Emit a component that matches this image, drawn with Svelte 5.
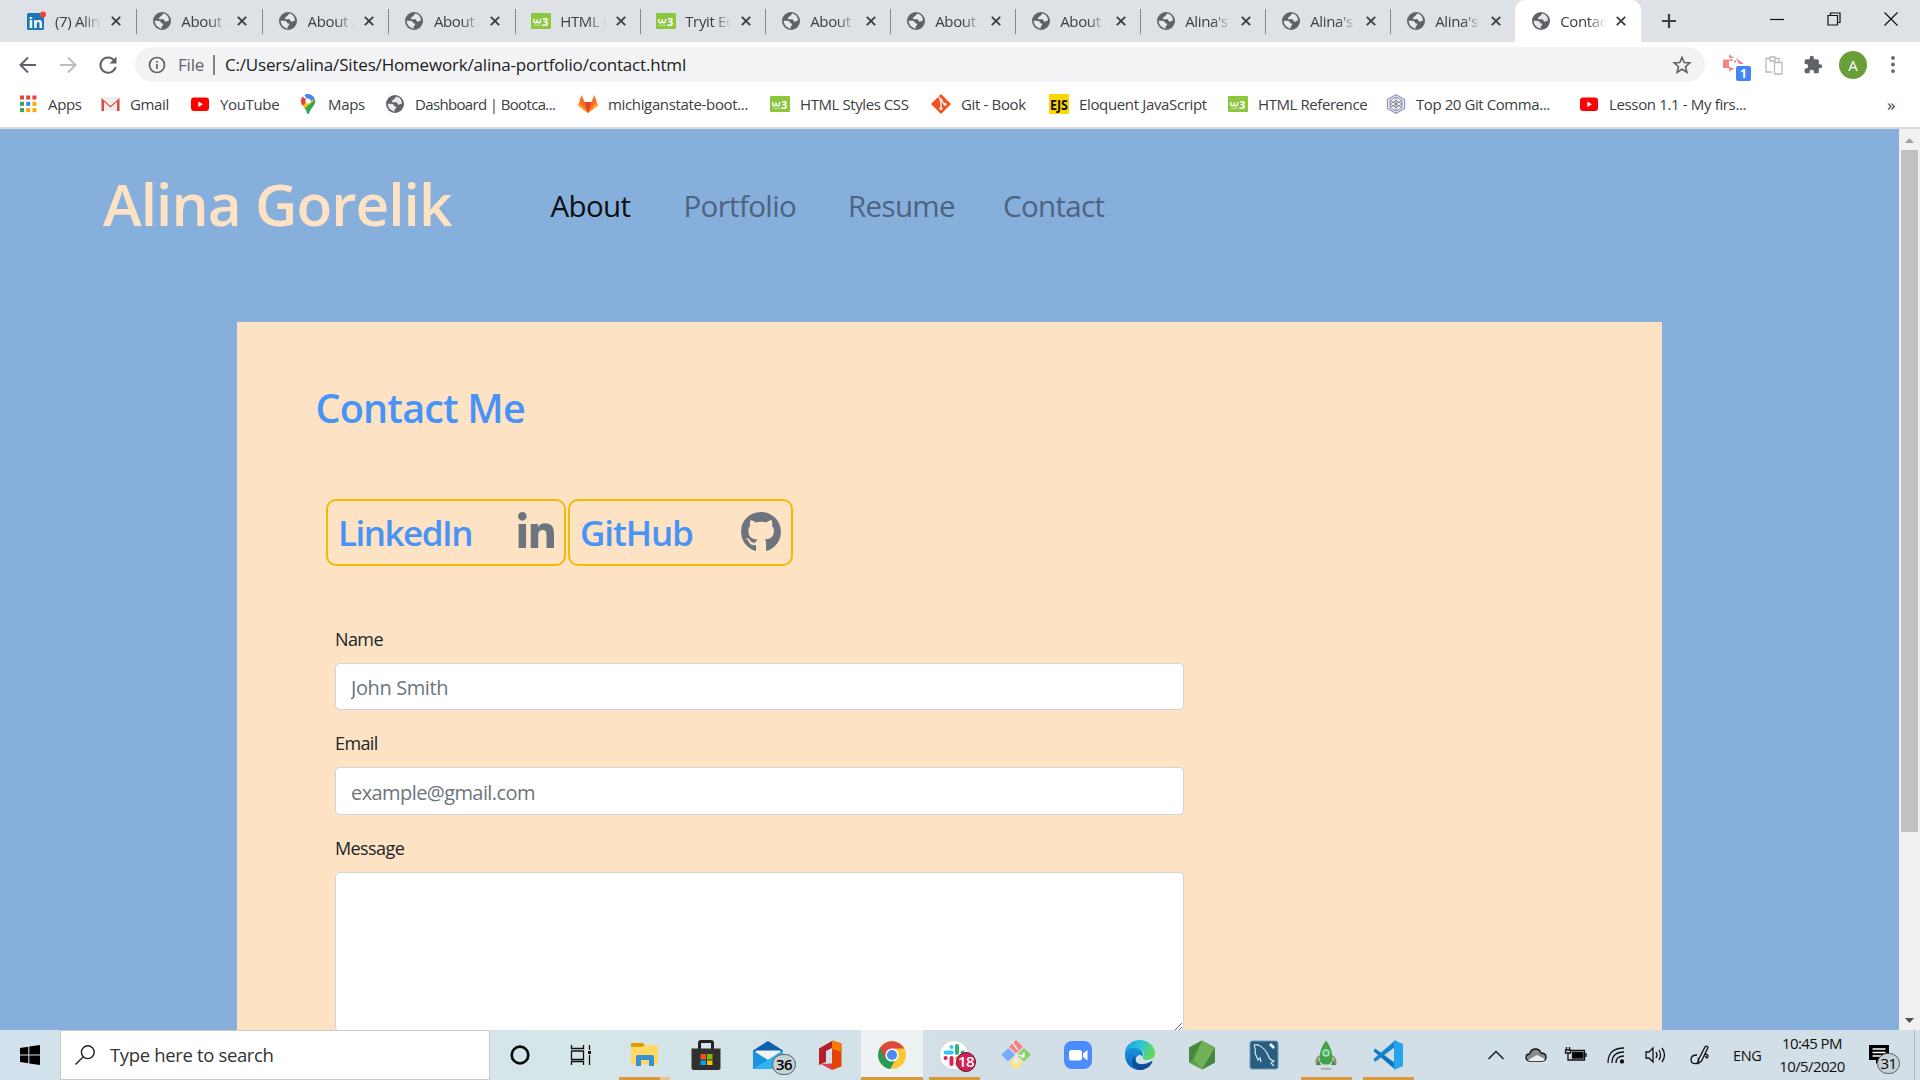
<script>
  const tabs = [
    { icon: 'linkedin', label: '(7) Alina' },
    { icon: 'globe', label: 'About A' },
    { icon: 'globe', label: 'About A' },
    { icon: 'globe', label: 'About A' },
    { icon: 'w3', label: 'HTML in' },
    { icon: 'w3', label: 'Tryit Ed' },
    { icon: 'globe', label: 'About A' },
    { icon: 'globe', label: 'About A' },
    { icon: 'globe', label: 'About A' },
    { icon: 'globe', label: "Alina's" },
    { icon: 'globe', label: "Alina's" },
    { icon: 'globe', label: "Alina's" },
    { icon: 'globe', label: 'Contac', active: true }
  ];
  const bookmarks = [
    ['apps', 'Apps'],
    ['gmail', 'Gmail'],
    ['youtube', 'YouTube'],
    ['maps', 'Maps'],
    ['globe', 'Dashboard | Bootca...'],
    ['gitlab', 'michiganstate-boot...'],
    ['w3', 'HTML Styles CSS'],
    ['git', 'Git - Book'],
    ['ejs', 'Eloquent JavaScript'],
    ['w3', 'HTML Reference'],
    ['hex', 'Top 20 Git Comma...'],
    ['youtube', 'Lesson 1.1 - My firs...']
  ];
  const dotColors = ['#ea4335', '#ea4335', '#ea4335', '#34a853', '#4285f4', '#fbab05', '#34a853', '#fbab05', '#fbab05'];
  const apps = [
    { id: 'cortana' },
    { id: 'taskview' },
    { id: 'explorer', open: true },
    { id: 'store' },
    { id: 'mail' },
    { id: 'office' },
    { id: 'chrome', open: true, current: true },
    { id: 'slack', open: true },
    { id: 'gitbash' },
    { id: 'zoom' },
    { id: 'edge' },
    { id: 'node' },
    { id: 'mysql' },
    { id: 'rocket', open: true },
    { id: 'vscode', open: true }
  ];
</script>

{#snippet favicon(name)}
  <svg class="fav" viewBox="0 0 20 20">
    {#if name === 'globe'}
      <circle cx="10" cy="10" r="9" fill="#5f6368" />
      <path fill="#e6e8eb" d="M11.4 2.6c-1.500 1-1 2-2.300 2.300-1.200.3-.7 1.500-1.800 1.700-.8.2-.4 1.200-.1 1.700h4.100c1.200 0 1 2.200 2.200 2.400 1.400.2 1.200-1.300 3.400-.9.300-3.300-1.800-6.300-5.500-7.200zM2.700 9.700c.1 4 3 7.200 7 7.700v-2.300c1.500-.2 1.500-1.400 1.400-2.600-1.700-.1-2.300-.7-2.500-2.100-2-.6-3.500-.7-5.900-.7z" />
    {:else if name === 'w3'}
      <rect y="2" width="20" height="16" rx="1" fill="#8dc63f" />
      <path d="M2.800 8v2.200q0 1.600 1.500 1.600t1.800-1.600V8.500v1.700q.2 1.600 1.700 1.600 1.700 0 1.700-1.600V8" fill="none" stroke="#fff" stroke-width="1.400" />
      <path d="M3 14.200h7" stroke="#d8ecbc" stroke-width=".8" />
      <text x="11" y="14.500" class="wthree">3</text>
    {:else if name === 'linkedin'}
      <rect x="1" y="2" width="17" height="17" rx="1.500" fill="#1c77b8" />
      <text x="2.500" y="16.500" class="li">in</text>
      <circle cx="17" cy="3.500" r="3" fill="#f44336" />
    {:else if name === 'apps'}
      {#each dotColors as c, i}
        <rect x={2 + (i % 3) * 6.2} y={1.5 + Math.floor(i / 3) * 6.3} width="4" height="4" fill={c} />
      {/each}
    {:else if name === 'gmail'}
      <rect x="1.500" y="3" width="18" height="14" rx="1" fill="#eee" />
      <path d="M1.500 17V4l9 8 9-8v13H17V7.800l-6.500 5.700L4 7.800V17z" fill="#dd4b3e" />
    {:else if name === 'youtube'}
      <rect x="1" y="3.500" width="18" height="13.500" rx="3" fill="#f00" />
      <path d="M8.300 7.400v5.600l4.700-2.800z" fill="#fff" />
    {:else if name === 'maps'}
      <path d="M4.500 2.600A7 7 0 0 0 5 12l5-5z" fill="#ea4335" />
      <path d="M15.500 2.600L5 12l2 3q5-5 9.800-9.500z" fill="#fbbc04" />
      <path d="M16.800 5.400Q18 9 15 12.500q-3 3.500-4.300 7.500h-1.200Q8.700 17 6.800 14.600z" fill="#34a853" />
      <path d="M6.500 1A7 7 0 0 1 16.800 5.400L10 7z" fill="#4285f4" />
      <circle cx="10" cy="7" r="2.600" fill="#fff" />
    {:else if name === 'gitlab'}
      <path d="M0 11.500L3.700 1 6.500 8h7L16.300 1 20 11.500 10 19z" fill="#fc6d26" />
      <path d="M6.500 8h7L10 19z" fill="#e24329" />
      <path d="M0 11.500L1.300 8 10 19zM20 11.500L18.700 8 10 19z" fill="#fca326" />
    {:else if name === 'git'}
      <path d="M10 0l10 10-10 10L0 10z" fill="#f4511e" />
      <path d="M7.500 2.800L10 5.500V14M10 6.500l4 4" stroke="#fff" stroke-width="1.300" fill="none" />
      <circle cx="10" cy="6" r="1.500" fill="#fff" /><circle cx="10" cy="14.500" r="1.600" fill="#fff" /><circle cx="14" cy="10.200" r="1.500" fill="#fff" />
    {:else if name === 'ejs'}
      <rect width="20" height="20" fill="#ffd500" />
      <text x="1" y="16" class="ejs-mark" textLength="18" lengthAdjust="spacingAndGlyphs">EJS</text>
    {:else if name === 'hex'}
      <path d="M10 .8l8.500 4.700v9L10 19.200l-8.500-4.700v-9z" fill="#f5f6fb" stroke="#8291cf" stroke-width="1.200" />
      <path d="M10 3l6 3.500v7L10 17l-6-3.500v-7zM10 3v14M4 6.500l12 7M16 6.500l-12 7M4 10l6-3.500 6 3.500-6 3.500z" fill="none" stroke="#6c7480" stroke-width=".8" />
    {/if}
  </svg>
{/snippet}

{#snippet appIcon(id)}
  <svg class="app-svg" viewBox="0 0 32 32">
    {#if id === 'cortana'}
      <circle cx="16" cy="16" r="8.300" fill="none" stroke="#0b0b0b" stroke-width="2.700" />
    {:else if id === 'taskview'}
      <path d="M6.500 6v3.500h12V6M6.500 12h12v8.500h-12zM6.500 26v-3.500h12V26M24.500 6v5M24.500 16v10" fill="none" stroke="#111" stroke-width="1.300" />
      <rect x="23" y="12" width="3" height="3" fill="#111" />
    {:else if id === 'explorer'}
      <path d="M3 4h12l2 2v5H3z" fill="#dd9f00" />
      <path d="M3 8h11l3-2h13v19.500H3z" fill="#ffd965" />
      <path d="M8 27v-9q0-2 2-2h14q2 0 2 2v9h-5v-6h-8v6z" fill="#3990d5" />
    {:else if id === 'store'}
      <path d="M9.500 11V4q0-1.500 1.500-1.500h10q1.500 0 1.500 1.500v7" fill="none" stroke="#222" stroke-width="3" />
      <path d="M1.500 9.500h29V29q0 2-2 2h-25q-2 0-2-2z" fill="#303030" />
      <path d="M10.500 15H16v5.500h-5.500z" fill="#f25022" /><path d="M17 15h5.500v5.500H17z" fill="#7fba00" />
      <path d="M10.500 21.500H16V26h-5.500z" fill="#00a4ef" /><path d="M17 21.500h5.500V26H17z" fill="#ffb900" />
    {:else if id === 'mail'}
      <path d="M1 11.500L16 2l15 9.500V15H1z" fill="#0a5fae" /><path d="M3.500 11.500h25V20h-25z" fill="#f1f3f6" /><path d="M1 11.500L16 21l15-9.500V30H1z" fill="#1b93de" /><path d="M1 30L31 11.500V30z" fill="#32b3ef" />
    {:else if id === 'office'}
      <path d="M5 9.500L18 2v7l-6 3v11l-7 3z" fill="#b4202a" />
      <path d="M18 1.500l9.500 3v23L18 31z" fill="#e24307" /><path d="M18 1.500l9.500 3V13L18 10z" fill="#f67b0a" />
      <path d="M7 25l11-.5V31z" fill="#e23b54" />
    {:else if id === 'chrome'}
      <circle cx="16" cy="16" r="14" fill="#fcc934" />
      <path d="M16 16L3.900 9A14 14 0 0 0 14.200 29.900L21 18z" fill="#259b57" />
      <path d="M3.900 9A14 14 0 0 1 28.100 9.500H16L9.500 20z" fill="#dc4a3d" />
      <circle cx="16" cy="16" r="6.600" fill="#fff" /><circle cx="16" cy="16" r="5.100" fill="#4a8bf5" />
    {:else if id === 'slack'}
      <circle cx="16" cy="16" r="14.500" fill="#fff" stroke="#c5ccd0" stroke-width=".6" />
      <g fill="none" stroke-width="4" stroke-linecap="round"><path d="M7.500 13.500h6.300M13.500 8v.1" stroke="#36c5f0" /><path d="M19 7v7M24.500 13.500h.1" stroke="#2eb67d" /><path d="M7.500 19h.1M13.500 19v6" stroke="#e01e5a" /><path d="M19 19h6M19 25v.1" stroke="#ecb22e" /></g>
    {:else if id === 'gitbash'}
      <path d="M16 1l6.800 6.800L16 14.500 9.200 7.800z" fill="#fb7d7d" /><path d="M8.200 9l6.800 6.800-7 6.700L1.200 15.800z" fill="#7caaff" />
      <path d="M24 9l6.800 6.800L24 22.500l-6.800-6.700z" fill="#86d35c" /><path d="M16 17l6.800 6.800L16 30.800l-6.800-7z" fill="#ffe47a" />
      <path d="M12 3l6 8M16 14v8M16 16l7 1M24 17v-4" stroke="#e5eef2" stroke-width="1.600" fill="none" /><circle cx="16" cy="22.500" r="2.400" fill="#e5eef2" /><circle cx="23" cy="17" r="2" fill="#e5eef2" />
    {:else if id === 'zoom'}
      <rect x="2" y="2" width="28" height="28" rx="8" fill="#4b8cfd" />
      <rect x="7" y="11" width="13" height="10.500" rx="2.500" fill="#fff" /><path d="M21 14.500l4.500-3.500v10.500L21 18z" fill="#fff" />
    {:else if id === 'edge'}
      <defs><linearGradient id="ea" x1="0" y1=".2" x2="1" y2=".5"><stop offset="0" stop-color="#1b9fe8" /><stop offset=".5" stop-color="#2fc5d8" /><stop offset="1" stop-color="#67dc4f" /></linearGradient><linearGradient id="eb" x1="0" y1="0" x2="0" y2="1"><stop offset="0" stop-color="#1995df" /><stop offset="1" stop-color="#0d62bd" /></linearGradient></defs>
      <path d="M1 15C1 6 8 1 16 1s15 6 15 13c0 5-4 7-8 7-4 0-5-2-4-3.500 2-3 0-7.500-7-7.500S1 15 1 15z" fill="url(#ea)" />
      <path d="M1 16c0-6 5-7 9-7 5 0 9 3 9 6 0 1-.5 2-1.200 2.500-1-3-6-1-6 3C12 27 20 31 20 31H16C8 31 1 25 1 16z" fill="url(#eb)" />
      <path d="M11 16c-2 7 4 12 14 7.500q3-2 3.500-.5-4 8-13 8c-6-1-10-9-4.500-15z" fill="#0c4d98" />
    {:else if id === 'node'}
      <path d="M16 1.500l13 7v15L16 30.500l-13-7v-15z" fill="#5b9e48" /><path d="M16 1.500l13 7L16 30.500 7 20z" fill="#72b057" /><path d="M3 8.500L16 1.500 8 19 3 23.500z" fill="#468b3c" /><path d="M29 8.500v15L16 30.500z" fill="#438644" />
    {:else if id === 'mysql'}
      <rect x="2" y="2" width="28" height="28" rx="2" fill="#285e82" stroke="#749aad" />
      <path d="M6 6c4-2 10 3 13 8 2 4 2 7 7 8l-3 2 3 3M6 6c1 3 2 5 1 8l3 7 2-2 1 4" fill="none" stroke="#dce8ef" stroke-width="1.200" /><path d="M22 5l4 4" stroke="#fff" stroke-width="2.600" />
    {:else if id === 'rocket'}
      <path d="M10 17c-4 2-4 6-3 9M22 17c4 2 4 6 3 9" stroke="#a78260" stroke-width="1.800" fill="none" />
      <path d="M16 1.500Q23 10 22.500 22L19 25.500h-6L9.500 22Q9 10 16 1.500z" fill="#43a34b" /><path d="M8 20l3 6H7zM24 20l-3 6h4z" fill="#2f8d3d" />
      <circle cx="16" cy="14" r="3" fill="#4db879" stroke="#b7e3bd" stroke-width="1.300" /><ellipse cx="16" cy="29.700" rx="6" ry="1" fill="#a2abb0" />
    {:else if id === 'vscode'}
      <path d="M3 9.500L23 24v6.500L1.500 12z" fill="#0b76bd" /><path d="M3 23L23 8V1.500L1.500 20z" fill="#1384cf" /><path d="M22 1l9 4v22l-9 4z" fill="#26a4ee" />
    {/if}
  </svg>
{/snippet}

<div class="screen">
  <div class="tabstrip">
    {#each tabs as tab, i}
      <div class="tab" class:wide={i < 4} class:active={tab.active} class:last={i === 11}>
        {@render favicon(tab.icon)}
        <span class="tab-label">{tab.label}</span>
        <svg class="x" viewBox="0 0 10 10"><path d="M.8.8l8.400 8.400M9.200.8L.8 9.200" /></svg>
      </div>
    {/each}
    <svg class="plus" viewBox="0 0 16 16"><path d="M8 1v14M1 8h14" /></svg>
    <div class="win">
      <svg viewBox="0 0 14 14"><path d="M0 7.500h14" /></svg>
      <svg viewBox="0 0 14 14"><path d="M1 3.500h9.500V13H1zM3.500 3.500V1H13v9.500h-2.500" /></svg>
      <svg viewBox="0 0 14 14"><path d="M.5.5l13 13M13.500.5l-13 13" /></svg>
    </div>
  </div>

  <div class="toolbar">
    <svg class="nav-ico" viewBox="0 0 20 20"><path d="M18 10H3M10 2.500L2.500 10l7.500 7.500" /></svg>
    <svg class="nav-ico dim" viewBox="0 0 20 20"><path d="M2 10h15M10 2.500l7.500 7.500-7.500 7.500" /></svg>
    <svg class="nav-ico" viewBox="0 0 20 20"><path d="M16.300 5.500A7.700 7.700 0 1 0 17.600 12" /><path class="solid" d="M18.500 1.500v7h-7z" /></svg>
    <div class="omnibox">
      <svg class="info" viewBox="0 0 18 18"><circle cx="9" cy="9" r="7.500" /><path d="M9 8v5M9 5v1.700" /></svg>
      <span class="scheme">File</span>
      <span class="bar"></span>
      <span class="url">C:/Users/alina/Sites/Homework/alina-portfolio/contact.html</span>
      <svg class="star" viewBox="0 0 20 20"><path d="M10 2.300l2.200 5.300 5.600.4-4.300 3.700 1.400 5.600-4.900-3-4.900 3 1.400-5.600L2.200 8l5.600-.4z" /></svg>
    </div>
    <div class="ext">
      <svg class="crx" viewBox="0 0 30 28"><path d="M1 5.500h6v8.500H1zM7 .5l5.500 3.500H7zM7 17.500V13l5.500 1.500zM13.500 3.500L22 10h-5z" fill="#f48585" /><path d="M7.500 5h3v2h-3zM12 6.500h2v2h-2z" fill="#f48585" /><rect x="14" y="12" width="15" height="15" rx="2" fill="#4285f4" /><text x="18" y="24">1</text></svg>
      <svg class="clip" viewBox="0 0 20 20"><path d="M8 17H2V3.500h4V2h5v1.500h4V7M6 3.500V6h5V3.500M10.500 7.500H18V19h-7.500z" fill="#fff" stroke="#bbb" stroke-width="1.300" /></svg>
      <svg class="puzzle" viewBox="0 0 24 24"><path d="M20.500 11H19V7c0-1.100-.9-2-2-2h-4V3.500a2.500 2.500 0 0 0-5 0V5H4c-1.100 0-2 .9-2 2v3.800h1.500a2.700 2.700 0 0 1 0 5.400H2V20c0 1.100.9 2 2 2h3.800v-1.500a2.700 2.700 0 0 1 5.400 0V22H17c1.100 0 2-.9 2-2v-4h1.500a2.500 2.500 0 0 0 0-5z" fill="#5f6368" /></svg>
      <span class="avatar">A</span>
      <svg class="kebab" viewBox="0 0 4 18"><circle cx="2" cy="2" r="2" /><circle cx="2" cy="9" r="2" /><circle cx="2" cy="16" r="2" /></svg>
    </div>
  </div>

  <div class="bookmarks">
    {#each bookmarks as [icon, label]}
      <div class="bm" class:long={icon === 'hex' || icon === 'w3'} class:tight={icon === 'globe'}>{@render favicon(icon)}<span>{label}</span></div>
    {/each}
    <span class="more">»</span>
  </div>

  <div class="viewport">
    <div class="page">
      <header>
        <h1>Alina Gorelik</h1>
        <nav><a class="on" href="#about">About</a><a href="#portfolio">Portfolio</a><a href="#resume">Resume</a><a href="#contact">Contact</a></nav>
      </header>
      <main>
        <h2>Contact Me</h2>
        <div class="links">
          <div class="link ln"><span>LinkedIn</span>
            <svg viewBox="0 0 448 448"><path d="M100.280 448H7.400V148.900h92.880zM53.790 108.100C24.090 108.100 0 83.500 0 53.800a53.790 53.790 0 0 1 107.580 0c0 29.700-24.100 54.300-53.790 54.300zM447.900 448h-92.680V302.400c0-34.700-.7-79.200-48.290-79.200-48.290 0-55.690 37.700-55.690 76.700V448h-92.780V148.900h89.080v40.800h1.300c12.400-23.500 42.690-48.300 87.880-48.300 94 0 111.280 61.900 111.280 142.300V448z" /></svg>
          </div>
          <div class="link gh"><span>GitHub</span>
            <svg viewBox="0 8 496 485"><path d="M165.900 397.400c0 2-2.300 3.600-5.200 3.600-3.300.3-5.600-1.300-5.600-3.600 0-2 2.300-3.600 5.200-3.600 3-.3 5.600 1.300 5.600 3.600zM244.800 8C106.100 8 0 113.300 0 252c0 110.900 69.800 205.800 169.500 239.200 12.800 2.300 17.300-5.600 17.300-12.100 0-6.200-.3-40.400-.3-61.400 0 0-70 15-84.700-29.800 0 0-11.400-29.100-27.800-36.600 0 0-22.900-15.700 1.600-15.400 0 0 24.900 2 38.600 25.800 21.900 38.600 58.600 27.500 72.900 20.900 2.300-16 8.800-27.100 16-33.700-55.900-6.200-112.300-14.300-112.300-110.500 0-27.500 7.600-41.300 23.600-58.900-2.600-6.500-11.100-33.300 2.600-67.900 20.900-6.500 69 27 69 27 20-5.600 41.500-8.500 62.800-8.500s42.800 2.900 62.800 8.500c0 0 48.100-33.600 69-27 13.700 34.700 5.200 61.400 2.600 67.900 16 17.700 25.800 31.500 25.800 58.900 0 96.500-58.900 104.200-114.800 110.500 9.200 7.900 17 22.900 17 46.400 0 33.700-.3 75.400-.3 83.600 0 6.500 4.600 14.400 17.300 12.100C428.200 457.800 496 362.900 496 252 496 113.300 383.500 8 244.800 8z" /></svg>
          </div>
        </div>
        <form>
          <label for="name">Name</label>
          <input id="name" placeholder="John Smith" />
          <label for="email">Email</label>
          <input id="email" class="second" placeholder="example@gmail.com" />
          <label for="msg">Message</label>
          <textarea id="msg"></textarea>
        </form>
      </main>
    </div>
    <div class="scroll">
      <svg viewBox="0 0 9 5"><path d="M0 5l4.500-5L9 5z" fill="#a3a3a3" /></svg>
      <div class="thumb"></div>
      <svg viewBox="0 0 9 5"><path d="M0 0h9L4.500 5z" fill="#505050" /></svg>
    </div>
  </div>

  <div class="taskbar">
    <div class="start"><svg viewBox="0 0 20 20"><path d="M0 3l8.300-1.200v7.700H0zM9.300 1.600L20 0v9.500H9.300zM0 10.500h8.300v7.700L0 17zM9.300 10.500H20V20L9.300 18.400z" /></svg></div>
    <div class="search">
      <svg viewBox="0 0 20 20"><circle cx="12.800" cy="7.200" r="6.400" /><path d="M8.300 11.700L.5 19.500" /></svg>
      <span>Type here to search</span>
    </div>
    <div class="apps">
      {#each apps as app}
        <div class="app {app.id}" class:open={app.open} class:current={app.current}>
          {@render appIcon(app.id)}
          {#if app.id === 'mail'}<span class="badge">36</span>{/if}
          {#if app.id === 'slack'}<span class="badge red">18</span>{/if}
        </div>
      {/each}
    </div>
    <div class="tray">
      <svg viewBox="0 0 24 24"><path d="M4.500 16L12 8.500l7.500 7.500" /></svg>
      <svg viewBox="0 0 24 24"><path d="M6 18q-4 0-4-3.500T5.500 11Q7 6 11.500 6q4 0 5.500 4 5 0 5 4t-4 4z" fill="#858c8f" /><path d="M4 17l9-5 8 4q-1 2-3 2H6z" fill="#eee" stroke="none" /></svg>
      <svg viewBox="0 0 24 24"><path d="M7 7.500h13.500v9.500H6M22 10v4M2.500 4v3M5.500 4v3M1.500 7h5v3h-5zM4 10v7h3" /><path d="M8.500 9.500h10.500v5.500h-10.500z" fill="#000" /></svg>
      <svg viewBox="0 0 24 24"><path d="M4 20Q4 5 20 5M8 20Q8 9 20 9M12 20Q12 13 20 13" /><circle cx="18" cy="18.500" r="1.500" fill="#000" /></svg>
      <svg viewBox="0 0 24 24"><path d="M2 9h3l4-4v14l-4-4H2zM12 9q2 3 0 6M15 7q3 5 0 10M18 5q5 7 0 14" /></svg>
      <svg class="pen" viewBox="0 0 24 24"><path d="M10 17.500L17 4q2-2 3 0.500L13.500 18 10 20.500zM17 11q5 1 2 4l-2-2M9 12q-6 0-6 4.500T8 20.500q4-1 2-5.500" /></svg>
      <span class="eng">ENG</span>
      <div class="clock"><span>10:45 PM</span><span>10/5/2020</span></div>
      <div class="note"><svg viewBox="0 0 24 24"><path d="M1 2h20v15h-9l-4 4v-4H1z" fill="#000" stroke="none" /><path d="M4.500 6h13M4.500 9.500h13M4.500 13h9" stroke="#fff" /></svg><span class="badge">31</span></div>
    </div>
  </div>
</div>

<style>
  :global(body) { margin: 0; overflow: hidden; }
  * { box-sizing: border-box; }
  .screen { width: 1920px; height: 1080px; display: flex; flex-direction: column; overflow: hidden; font-family: 'Open Sans', 'Noto Sans', sans-serif; color: #3c4043; background: #fff; white-space: nowrap; }
  svg { display: block; flex: none; }
  .fav { width: 20px; height: 20px; }
  .wthree { font: 700 11px 'Open Sans', sans-serif; fill: #fff; }
  .li { font: 700 15px 'Open Sans', sans-serif; fill: #fff; }
  .ejs-mark { font: 700 15px 'Open Sans', sans-serif; letter-spacing: 0; fill: #111; }

  .tabstrip { height: 42px; background: #dee1e6; display: flex; align-items: center; padding-left: 10.500px; }
  .tab { width: 125px; height: 25px; display: flex; align-items: center; padding-left: 15px; border-right: 1.500px solid #85888d; }
  .tab.wide { width: 126.300px; }
  .tab.last { border-color: transparent; }
  .tab.active { height: 42px; background: #fff; border: 0; border-radius: 10px 10px 0 0; margin-left: -1px; width: 126px; padding-left: 16px; }
  .tab-label { margin-left: 9.500px; width: 58px; margin-right: -11px; font-size: 15px; letter-spacing: -.35px; mask-image: linear-gradient(90deg, #000 48%, transparent 80%); }
  .x { width: 10px; height: 10px; margin-left: 9px; stroke: #3c4043; stroke-width: 1.900; }
  .plus { width: 16px; height: 16px; margin-left: 20px; stroke: #3c4043; stroke-width: 2.200; }
  .win { display: flex; gap: 43px; margin-left: auto; padding: 0 22px 5px 0; }
  .win svg { width: 14px; height: 14px; fill: none; stroke: #111; stroke-width: 1.200; }

  .toolbar { height: 45px; display: flex; align-items: center; padding-left: 17.500px; }
  .nav-ico { width: 20px; height: 20px; margin-right: 20px; fill: none; stroke: #5f6368; stroke-width: 2; }
  .nav-ico.dim { stroke: #babcbe; }
  .solid { fill: #5f6368; stroke: none; }
  .omnibox { width: 1570px; height: 35px; margin-left: -2.500px; border-radius: 18px; background: #f1f3f4; display: flex; align-items: center; padding: 0 13px; font-size: 17px; }
  .info { width: 18px; height: 18px; fill: none; stroke: #5f6368; stroke-width: 1.700; }
  .scheme { margin-left: 12px; width: 26px; color: #5f6368; letter-spacing: -.2px; }
  .bar { width: 1.500px; height: 20px; margin: 0 10.500px 0 9px; background: #80868b; }
  .url { color: #202124; letter-spacing: -.18px; }
  .star { width: 20px; height: 20px; margin-left: auto; fill: none; stroke: #5f6368; stroke-width: 1.600; }
  .ext { display: flex; align-items: center; }
  .crx { width: 30px; height: 28px; margin: 7px 0 0 17px; }
  .crx text { font: 700 12px 'Open Sans', sans-serif; fill: #fff; }
  .clip { width: 20px; height: 20px; margin-left: 12px; }
  .puzzle { width: 20px; height: 20px; margin-left: 19px; }
  .avatar { width: 28px; height: 28px; margin-left: 16px; border-radius: 50%; background: #689f38; color: #fff; display: grid; place-items: center; font-size: 15px; }
  .kebab { width: 4px; height: 17px; margin-left: 23.500px; fill: #5f6368; }

  .bookmarks { height: 42px; padding: 0 0 6px 18px; border-bottom: 2px solid #d8dade; display: grid; grid-template-columns: 82px 90px 108px 87px 193px 192px 161px 118px 179px 158px 193px 308px 1fr; align-items: center; font-size: 15px; letter-spacing: -.35px; }
  .bm { display: flex; align-items: center; gap: 10px; }
  .bm.long { letter-spacing: -.42px; }
  .bm.tight { letter-spacing: -.65px; }
  .more { font-size: 17px; }

  .viewport { height: 901px; display: flex; overflow: hidden; }
  .page { flex: 1; background: #87afdb; overflow: hidden; }
  .scroll { width: 21px; background: #f1f1f1; display: flex; flex-direction: column; align-items: center; padding: 9px 0 7px; }
  .scroll svg { width: 9px; height: 5px; }
  .thumb { width: 17px; height: 682px; margin: 7px 0 auto; background: #c1c1c1; }
  header { height: 193px; display: flex; padding: 33px 0 0 103px; }
  h1 { margin: 0; width: 447.500px; font-size: 58.500px; line-height: 82px; font-weight: 600; letter-spacing: -.95px; color: #fde2c4; }
  nav { display: grid; grid-template-columns: 133px 164.500px 155px 110px; padding-top: 23px; font-size: 29.500px; line-height: 42px; font-weight: 400; letter-spacing: -.65px; }
  a { color: #4d6380; text-decoration: none; }
  .on { color: #0b0e12; }
  main { width: 1425px; height: 760px; margin-left: 237px; padding: 59px 0 0 78.500px; background: #fde2c4; }
  h2 { margin: 0; font-size: 39.500px; line-height: 55px; font-weight: 600; letter-spacing: -.8px; color: #4793f7; }
  .links { display: flex; gap: 2px; margin: 63px 0 0 10.500px; }
  .link { height: 67px; border: 2px solid #f4b907; border-radius: 10px; display: flex; justify-content: space-between; padding: 0 10px 0 10px; color: #4793f7; font-size: 35px; font-weight: 600; line-height: 64px; letter-spacing: -1.500px; }
  .link svg { fill: #6c757d; margin-top: 11px; }
  .ln { width: 240px; }
  .gh { width: 225px; letter-spacing: -1.100px; }
  .ln svg { width: 36px; height: 36px; }
  .gh svg { width: 40px; height: 39px; }
  form { width: 849px; margin: 60px 0 0 19.500px; display: flex; flex-direction: column; }
  label { font-size: 18px; line-height: 27px; margin-bottom: 10px; color: #212529; letter-spacing: -.6px; }
  input { height: 47px; margin: 0 0 20px; padding: 2px 15px 0; border: 1px solid #ced4da; border-radius: 5px; font: 20px 'Open Sans', sans-serif; letter-spacing: -.4px; }
  .second { height: 48px; letter-spacing: -.58px; }
  input::placeholder { color: #6c757d; }
  textarea { height: 160px; border: 1px solid #ced4da; border-radius: 5px; resize: vertical; }

  .taskbar { height: 50px; display: flex; background: linear-gradient(90deg, #d2e2ec 0, #d5e6e9 30%, #d2dfe7 50%, #d2dfe6 100%); color: #111; }
  .start { width: 60px; display: grid; place-items: center; }
  .start svg { width: 20px; height: 20px; }
  .search { width: 430px; background: #fff; border: 1px solid #c9c9c9; display: flex; align-items: center; padding-left: 14px; gap: 15px; font-size: 18.500px; letter-spacing: -.35px; color: #333; }
  .search svg { width: 20px; height: 20px; fill: none; stroke: #222; stroke-width: 1.400; }
  .search span { padding-bottom: 2px; }
  .apps { display: flex; }
  .app { position: relative; width: 62px; display: grid; place-items: center; }
  .app-svg { width: 32px; height: 32px; }
  .cortana { width: 60px; }
  .taskview { width: 61px; }
  .explorer { margin-left: 2px; }
  .store .app-svg { margin-right: 1px; }
  .open::after { content: ''; position: absolute; left: 6px; right: 5px; bottom: 0; height: 3px; background: #df973b; }
  .explorer::after { background: linear-gradient(90deg, #df973b 80%, #ecc285 80%); }
  .current { background: #edf2f5; }
  .current::after { left: 0; right: 0; }
  .badge { position: absolute; left: 35px; top: 24px; width: 24px; height: 21px; border: 1px solid #555c60; border-radius: 11px; background: #c5d1d7; color: #000; font-size: 15px; font-weight: 600; line-height: 18px; text-align: center; letter-spacing: -.5px; }
  .badge.red { left: 33px; top: 22px; width: 20px; height: 20px; background: #d91e56; border-color: #6c1632; color: #fff; line-height: 17px; }
  .tray { margin-left: auto; margin-right: 5px; border-right: 1px solid #a9b7c0; display: flex; align-items: center; }
  .tray svg { width: 24px; height: 24px; margin-right: 16px; fill: none; stroke: #111; stroke-width: 1.300; }
  .tray .pen { margin: 0 21px 0 4px; }
  .eng { width: 29px; font-size: 14.500px; letter-spacing: -.3px; }
  .clock { width: 68px; margin-left: 16px; display: flex; flex-direction: column; align-items: center; font-size: 15px; line-height: 23px; letter-spacing: -.6px; }
  .note { position: relative; margin-left: 22px; width: 46px; }
  .note .badge { left: 9px; top: 10px; width: 23px; font-weight: 400; }
</style>
